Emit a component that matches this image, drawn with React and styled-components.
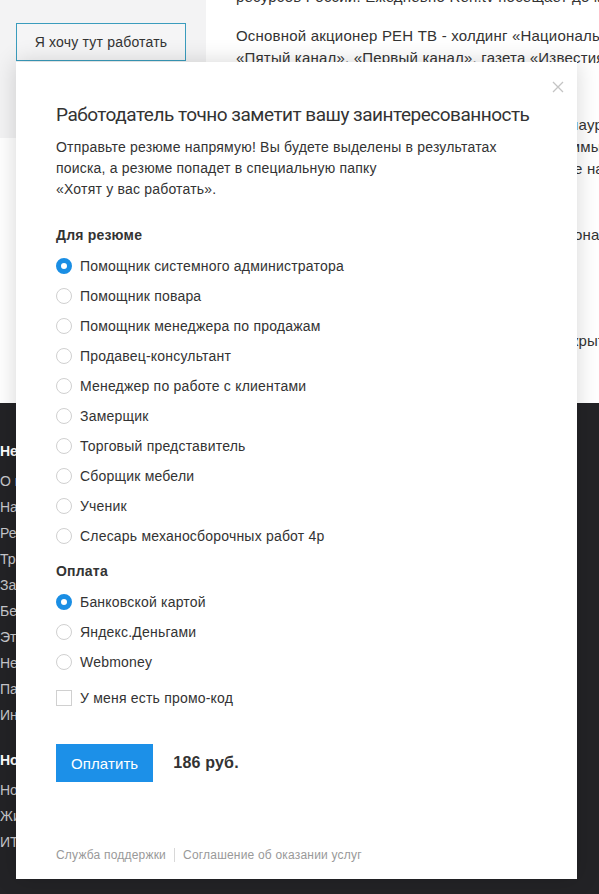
import React from 'react';
import styled, { createGlobalStyle } from 'styled-components';

const GlobalStyle = createGlobalStyle`
  html, body {
    margin: 0;
    padding: 0;
    background: #fff;
    font-family: "Liberation Sans", Arial, sans-serif;
    color: #333;
  }
`;

const Page = styled.div`
  position: relative;
  width: 599px;
  height: 894px;
  overflow: hidden;
`;

const Top = styled.div`
  display: flex;
  height: 403px;
  overflow: hidden;
`;

const Sidebar = styled.div`
  flex: 0 0 206px;
  height: 138px;
  box-sizing: border-box;
  background: #f3f3f4;
  padding: 23px 0 0 16px;
`;

const OutlineButton = styled.button`
  width: 170px;
  height: 38px;
  background: #f5f5f6;
  border: 1px solid #3a9cbd;
  font-family: "Liberation Sans", Arial, sans-serif;
  font-size: 14px;
  letter-spacing: 0.2px;
  color: #333;
  cursor: pointer;
`;

const Article = styled.div`
  flex: 1;
  min-width: 0;
  padding-left: 30px;
  margin-top: -14px;
  font-size: 15px;
  line-height: 22px;
  letter-spacing: 0.2px;
  color: #333;
`;

const Para = styled.div`
  margin-bottom: ${(p) => p.gap || 11}px;
`;

const Line = styled.div`
  white-space: nowrap;
`;

const Footer = styled.div`
  background: #232326;
  height: 491px;
  padding: 35px 0 0 0;
  box-sizing: border-box;
`;

const FooterGroup = styled.div`
  margin-bottom: 19px;
`;

const FooterHead = styled.div`
  color: #fff;
  font-weight: bold;
  font-size: 14px;
  line-height: 26px;
  margin-bottom: 4px;
`;

const FooterLink = styled.div`
  color: #c8c8cc;
  font-size: 14px;
  line-height: 26px;
`;

const Modal = styled.div`
  position: absolute;
  left: 16px;
  top: 62px;
  width: 561px;
  height: 817px;
  box-sizing: border-box;
  background: #fff;
  box-shadow: 0 0 22px rgba(0, 0, 0, 0.16);
  padding: 41px 40px 0 40px;
  display: flex;
  flex-direction: column;
  letter-spacing: 0.2px;
`;

const Close = styled.button`
  position: absolute;
  top: 18px;
  right: 12px;
  width: 14px;
  height: 14px;
  padding: 0;
  border: none;
  background: none;
  cursor: pointer;
`;

const Title = styled.h2`
  margin: 0;
  font-family: Roboto, "Liberation Sans", sans-serif;
  font-weight: normal;
  font-size: 19px;
  letter-spacing: -0.5px;
  line-height: 24px;
  white-space: nowrap;
  color: #333;
`;

const Lead = styled.p`
  margin: 10px 0 0 0;
  font-size: 14px;
  line-height: 21px;
  color: #333;
`;

const Section = styled.div`
  margin-top: ${(p) => p.top}px;
`;

const SectionTitle = styled.div`
  font-size: 14px;
  font-weight: bold;
  line-height: 20px;
  color: #333;
  margin-bottom: 6px;
`;

const Option = styled.label`
  display: flex;
  align-items: center;
  gap: 8px;
  height: 30px;
  margin-top: ${(p) => p.offset || 0}px;
  font-size: 14px;
  color: #333;
  cursor: pointer;
`;

const Radio = styled.span`
  flex: 0 0 auto;
  width: 16px;
  height: 16px;
  box-sizing: border-box;
  border-radius: 50%;
  border: ${(p) => (p.checked ? '5px solid #1a8ee4' : '1px solid #d0d0d0')};
  background: #fff;
`;

const Check = styled.span`
  flex: 0 0 auto;
  width: 16px;
  height: 16px;
  box-sizing: border-box;
  border: 1px solid #d0d0d0;
  background: #fff;
`;

const PayRow = styled.div`
  display: flex;
  align-items: center;
  gap: 20px;
  margin-top: 31px;
`;

const PayButton = styled.button`
  height: 38px;
  padding: 0 15px;
  background: #1c90e8;
  border: none;
  color: #fff;
  font-family: "Liberation Sans", Arial, sans-serif;
  font-size: 15px;
  letter-spacing: 0.1px;
  cursor: pointer;
`;

const Price = styled.span`
  font-size: 16px;
  font-weight: bold;
  color: #333;
`;

const Links = styled.div`
  margin-top: auto;
  margin-bottom: 17px;
  display: flex;
  align-items: center;
  font-size: 12px;
  color: #999;
`;

const Sep = styled.span`
  width: 1px;
  height: 14px;
  background: #d8d8d8;
  margin: 0 8px;
`;

const resumes = [
  'Помощник системного администратора',
  'Помощник повара',
  'Помощник менеджера по продажам',
  'Продавец-консультант',
  'Менеджер по работе с клиентами',
  'Замерщик',
  'Торговый представитель',
  'Сборщик мебели',
  'Ученик',
  'Слесарь механосборочных работ 4р',
];

const payments = ['Банковской картой', 'Яндекс.Деньгами', 'Webmoney'];

const footerGroups = [
  {
    head: 'HeadHunter',
    links: [
      'О компании',
      'Наши вакансии',
      'Реклама на сайте',
      'Требования к ПО',
      'Защита персональных данных',
      'Безопасный HeadHunter',
      'Этика',
      'Неактивные',
      'Партнерам',
      'Инвесторам',
    ],
  },
  { head: 'Новости', links: ['Новости', 'Жизнь компании', 'ИТ-сообщество'] },
];

export default function App() {
  return (
    <Page>
      <GlobalStyle />
      <Top>
        <Sidebar>
          <OutlineButton>Я хочу тут работать</OutlineButton>
        </Sidebar>
        <Article>
          <Para gap={17}>
            <Line>ресурсов России. Ежедневно Ren.tv посещает до миллиона человек.</Line>
          </Para>
          <Para gap={23}>
            <Line>Основной акционер РЕН ТВ - холдинг «Национальная Медиа Группа»,</Line>
            <Line>«Пятый канал», «Первый канал», газета «Известия» и другие.</Line>
            <Line>и другие крупные СМИ.</Line>
          </Para>
          <Para gap={44}>
            <Line>Телеканал РЕН ТВ, неоднократно становился лауреатом премий.</Line>
            <Line>За двадцать лет в эфире вышли в свет программы многих жанров.</Line>
            <Line>В 2016 году телеканал переехал в новое здание на Зубовском.</Line>
          </Para>
          <Para gap={84}>
            <Line>Вещание канала ведётся через нашу сеть региональных партнёров.</Line>
          </Para>
          <Para>
            <Line>Мы предлагаем интересную работу, яркий и открытый коллектив.</Line>
          </Para>
        </Article>
      </Top>
      <Footer>
        {footerGroups.map((g) => (
          <FooterGroup key={g.head}>
            <FooterHead>{g.head}</FooterHead>
            {g.links.map((l) => (
              <FooterLink key={l}>{l}</FooterLink>
            ))}
          </FooterGroup>
        ))}
      </Footer>

      <Modal>
        <Close aria-label="Закрыть">
          <svg width="14" height="14" viewBox="0 0 14 14">
            <path d="M2 2 L12 12 M12 2 L2 12" stroke="#c4c4c4" strokeWidth="1.3" />
          </svg>
        </Close>
        <Title>Работодатель точно заметит вашу заинтересованность</Title>
        <Lead>
          Отправьте резюме напрямую! Вы будете выделены в результатах
          <br />
          поиска, а резюме попадет в специальную папку
          <br />
          «Хотят у вас работать».
        </Lead>
        <Section top={25}>
          <SectionTitle>Для резюме</SectionTitle>
          {resumes.map((r, i) => (
            <Option key={r}>
              <Radio checked={i === 0} />
              {r}
            </Option>
          ))}
        </Section>
        <Section top={10}>
          <SectionTitle>Оплата</SectionTitle>
          {payments.map((p, i) => (
            <Option key={p}>
              <Radio checked={i === 0} />
              {p}
            </Option>
          ))}
          <Option offset={6}>
            <Check />
            У меня есть промо-код
          </Option>
        </Section>
        <PayRow>
          <PayButton>Оплатить</PayButton>
          <Price>186 руб.</Price>
        </PayRow>
        <Links>
          <span>Служба поддержки</span>
          <Sep />
          <span>Соглашение об оказании услуг</span>
        </Links>
      </Modal>
    </Page>
  );
}
